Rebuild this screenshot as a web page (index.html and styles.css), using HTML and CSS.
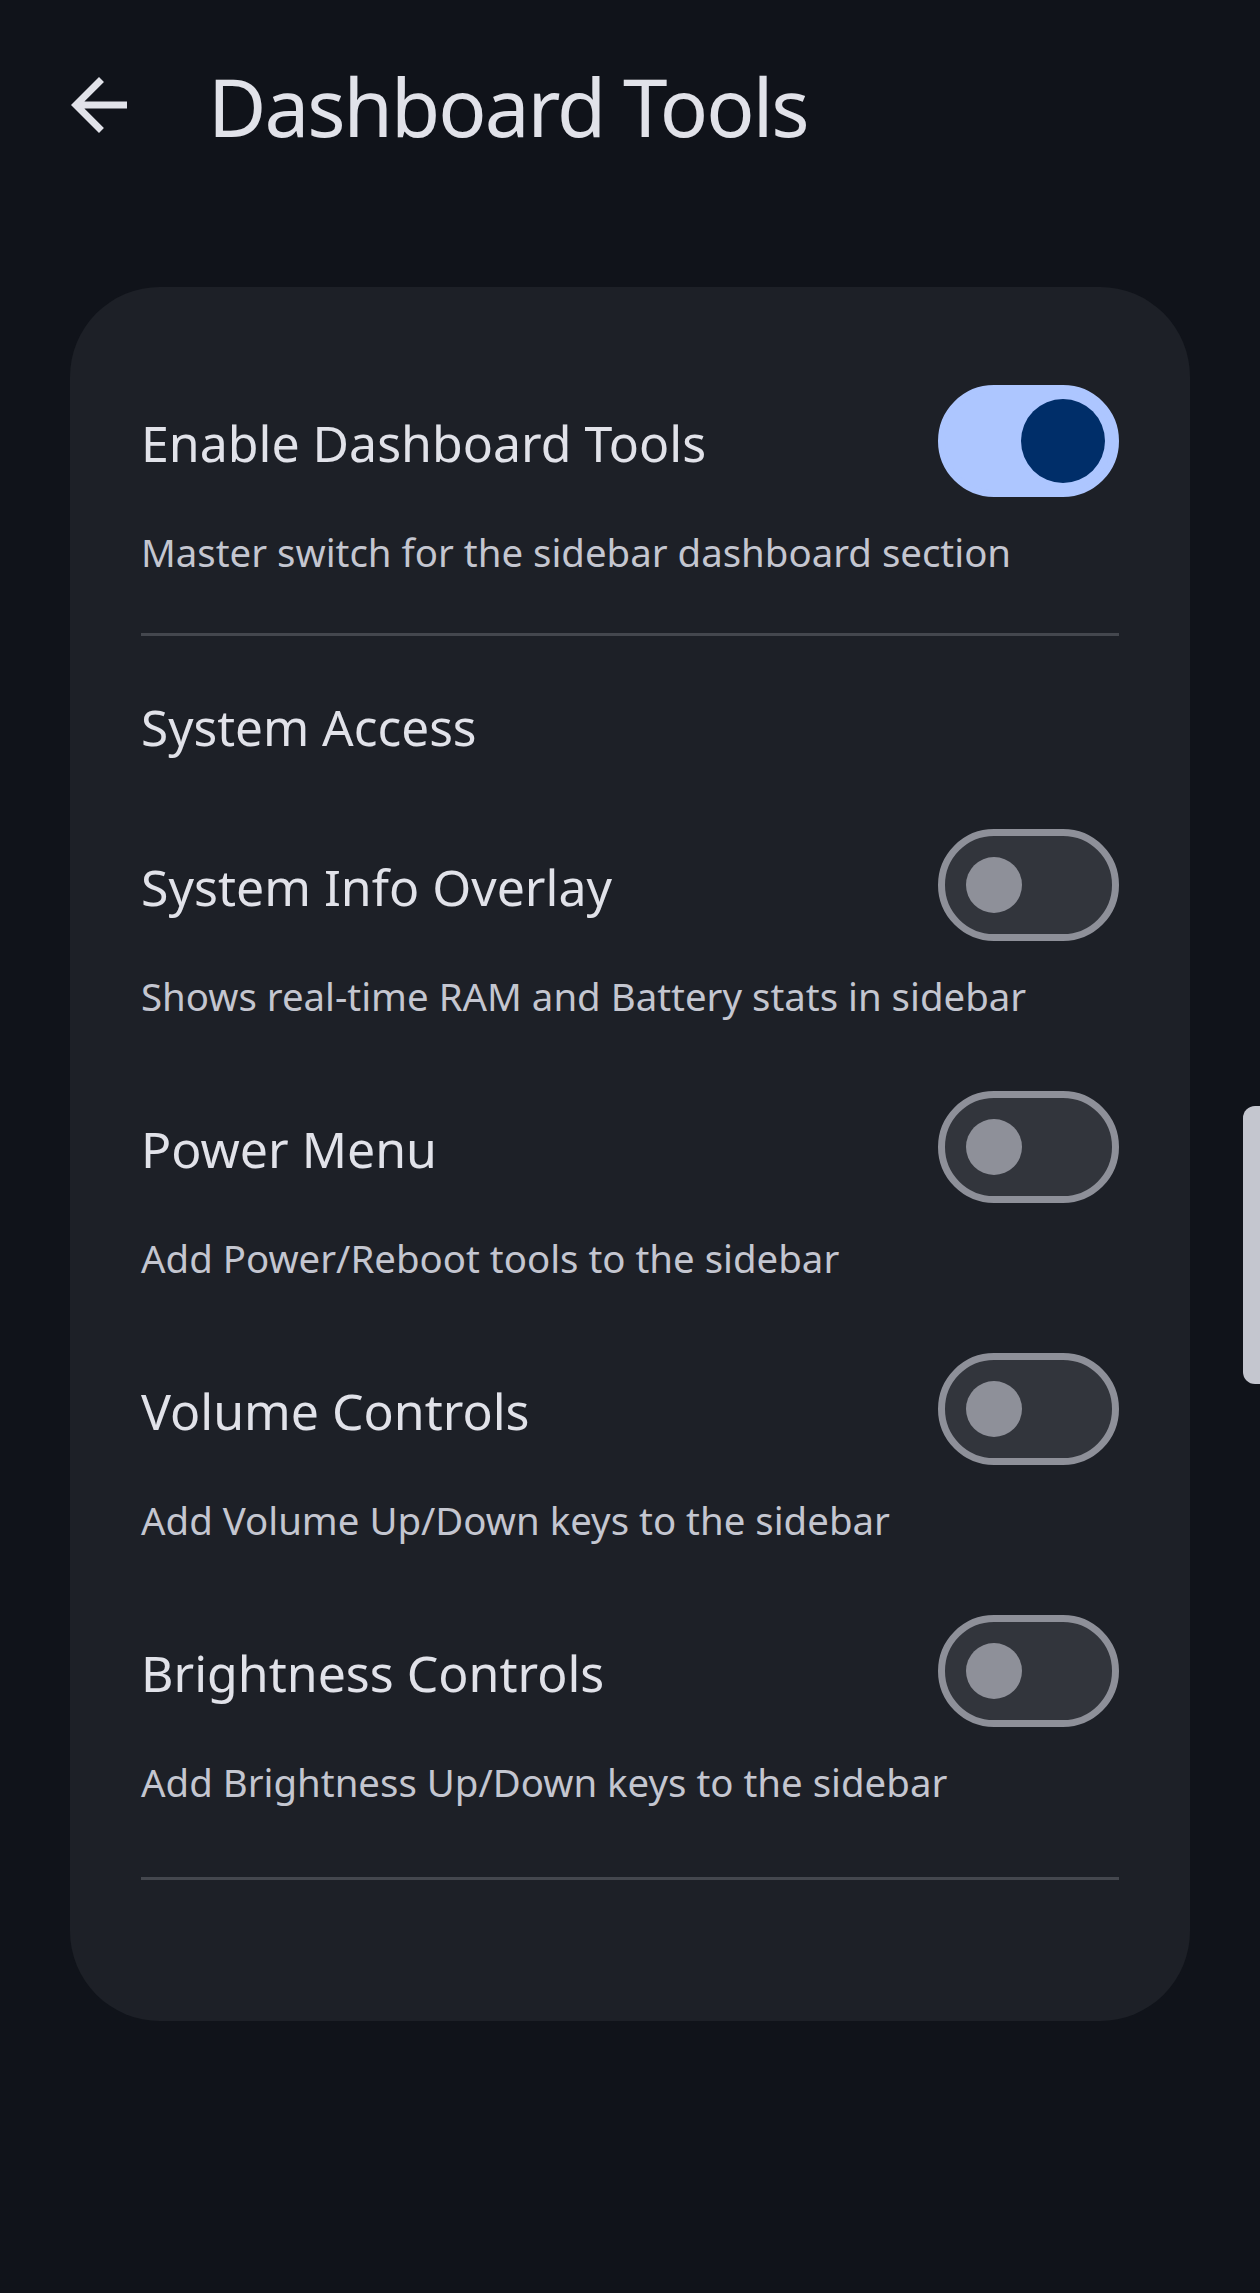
FILE: index.html
```html
<!DOCTYPE html>
<html lang="en">

<head>
    <meta charset="UTF-8">
    <meta name="viewport" content="width=device-width, initial-scale=1.0">
    <title>Dashboard Tools</title>
    <link rel="stylesheet" href="styles.css">
</head>

<body>

    <header class="top-bar">
        <button class="back-button" aria-label="Back">
            <svg viewBox="0 0 24 24" width="84" height="84">
                <path d="M20 11H7.83l5.59-5.59L12 4l-8 8 8 8 1.41-1.41L7.83 13H20v-2z" fill="currentColor" />
            </svg>
        </button>
        <h1 class="page-title">Dashboard Tools</h1>
    </header>

    <main class="card">
        <div class="setting">
            <div class="setting-row">
                <span class="setting-title">Enable Dashboard Tools</span>
                <span class="switch on"><span class="thumb"></span></span>
            </div>
            <p class="setting-desc">Master switch for the sidebar dashboard section</p>
        </div>

        <hr class="divider first">

        <h2 class="section-title">System Access</h2>

        <div class="setting">
            <div class="setting-row">
                <span class="setting-title">System Info Overlay</span>
                <span class="switch"><span class="thumb"></span></span>
            </div>
            <p class="setting-desc">Shows real-time RAM and Battery stats in sidebar</p>
        </div>

        <div class="setting">
            <div class="setting-row">
                <span class="setting-title">Power Menu</span>
                <span class="switch"><span class="thumb"></span></span>
            </div>
            <p class="setting-desc">Add Power/Reboot tools to the sidebar</p>
        </div>

        <div class="setting">
            <div class="setting-row">
                <span class="setting-title">Volume Controls</span>
                <span class="switch"><span class="thumb"></span></span>
            </div>
            <p class="setting-desc">Add Volume Up/Down keys to the sidebar</p>
        </div>

        <div class="setting">
            <div class="setting-row">
                <span class="setting-title">Brightness Controls</span>
                <span class="switch"><span class="thumb"></span></span>
            </div>
            <p class="setting-desc">Add Brightness Up/Down keys to the sidebar</p>
        </div>

        <hr class="divider last">
    </main>

    <!-- полоса прокрутки поверх страницы -->
    <div class="scrollbar"></div>

</body>

</html>
```

FILE: styles.css
```css
/* Основные стили */
body {
    margin: 0;
    background-color: #10131a;
    color: #e1e2e9;
    font-family: 'Noto Sans', 'Open Sans', sans-serif;
    position: relative;
}

/* Верхняя панель */
.top-bar {
    display: flex;
    align-items: center;
    padding: 63px 0 0 57px;
}

.back-button {
    display: flex;
    width: 84px;
    height: 84px;
    padding: 0;
    border: none;
    background: none;
    color: #e1e2e9;
}

.page-title {
    margin: 0 0 0 67px;
    font-size: 80px;
    font-weight: 400;
    line-height: 84px;
    letter-spacing: -2px;
    position: relative;
    top: 1px;
}

/* Карточка с настройками */
.card {
    margin: 140px 70px 0;
    padding: 98px 71px 141px;
    background-color: #1d2027;
    border-radius: 90px;
}

.setting + .setting {
    margin-top: 69px;
}

.setting-row {
    display: flex;
    align-items: center;
    justify-content: space-between;
    height: 112px;
}

.setting-title {
    font-size: 50px;
    line-height: 64px;
    padding-top: 3px;
}

.setting-desc {
    margin: 29px 0 0;
    font-size: 38.4px;
    line-height: 52px;
    color: #c4c6d0;
}

.section-title {
    margin: 59px 0 70px;
    font-size: 49.5px;
    font-weight: 400;
    line-height: 64px;
}

.divider {
    height: 3px;
    margin: 0;
    border: none;
    background-color: #44474e;
}

.divider.first {
    margin-top: 55px;
}

.divider.last {
    margin-top: 69px;
}

/* Переключатель */
.switch {
    display: flex;
    align-items: center;
    box-sizing: border-box;
    width: 181px;
    height: 112px;
    padding-left: 21px;
    border: 7px solid #8e9099;
    border-radius: 56px;
    background-color: #32353c;
}

.switch .thumb {
    width: 56px;
    height: 56px;
    border-radius: 50%;
    background-color: #8e9099;
}

.switch.on {
    justify-content: flex-end;
    padding: 0 7px 0 0;
    border-color: #adc6ff;
    background-color: #adc6ff;
}

.switch.on .thumb {
    width: 84px;
    height: 84px;
    background-color: #002e69;
}

/* Полоса прокрутки */
.scrollbar {
    position: absolute;
    top: 1106px;
    right: 0;
    width: 17px;
    height: 278px;
    border-radius: 12px 0 0 12px;
    background-color: #c4c6cf;
}
```
